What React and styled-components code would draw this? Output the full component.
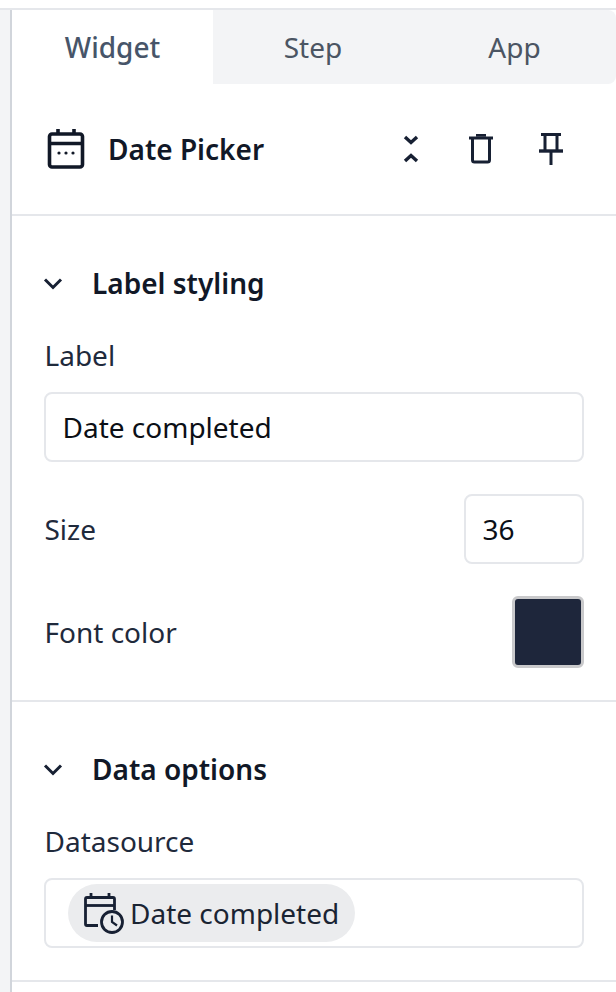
import React from "react";
import styled, { createGlobalStyle } from "styled-components";

const Global = createGlobalStyle`
  html, body { margin: 0; padding: 0; background: #fff; }
  body { font-family: "Noto Sans", "Open Sans", sans-serif; color: #111827; }
  * { box-sizing: border-box; }
`;

const Page = styled.div`
  width: 616px;
  height: 992px;
  overflow: hidden;
  padding-top: 8px;
  background: #fff;
`;
const Frame = styled.div`
  height: 984px;
  border-top: 2px solid #e5e7eb;
  display: flex;
`;
const Gutter = styled.div`
  width: 12px;
  background: #f3f4f6;
  border-right: 2px solid #d1d5db;
`;
const Panel = styled.div`
  flex: 1;
  display: flex;
  flex-direction: column;
`;
const Tabs = styled.div`
  height: 74px;
  display: grid;
  grid-template-columns: 201px 200px 1fr;
  background: #f3f4f6;
  border-radius: 0 8px 8px 0;
`;
const Tab = styled.div`
  display: flex;
  align-items: center;
  justify-content: center;
  font-size: 28px;
  color: #4b5563;
  font-weight: ${(p) => (p.$active ? 500 : 400)};
  background: ${(p) => (p.$active ? "#fff" : "transparent")};
  color: ${(p) => (p.$active ? "#475569" : "#4b5563")};
`;
const Header = styled.div`
  height: 132px;
  display: flex;
  align-items: center;
  padding: 0 45px 0 35px;
  border-bottom: 2px solid #e5e7eb;
`;
const Title = styled.div`
  flex: 1;
  margin-left: 23px;
  font-size: 28px;
  font-weight: 600;
  color: #111827;
`;
const Actions = styled.div`
  display: flex;
  gap: 30px;
  align-items: center;
`;
const IconSlot = styled.div`
  width: 40px;
  height: 40px;
  display: flex;
  align-items: center;
  justify-content: center;
`;
const Section = styled.section`
  padding: 0 32px;
  border-bottom: 2px solid #e5e7eb;
  height: ${(p) => p.$h}px;
`;
const SectionHead = styled.div`
  height: 38px;
  margin-top: 48px;
  display: flex;
  align-items: center;
  gap: 29px;
  font-size: 28px;
  font-weight: 600;
  color: #111827;
`;
const ChevronSvg = styled.svg`
  margin: 1px 0 0 -1px;
`;
const FieldLabel = styled.div`
  margin-top: 34px;
  padding-left: 0.5px;
  font-size: 28px;
  line-height: 38px;
  color: #1f2a3c;
`;
const Input = styled.div`
  margin-top: 18px;
  height: 70px;
  border: 2px solid #e5e7eb;
  border-radius: 8px;
  padding: 0 16.5px;
  display: flex;
  align-items: center;
  font-size: 28px;
  color: #0b0f16;
`;
const Row = styled.div`
  display: flex;
  align-items: center;
  justify-content: space-between;
  margin-top: ${(p) => p.$mt}px;
`;
const RowLabel = styled.div`
  padding-left: 0.5px;
  font-size: 28px;
  line-height: 38px;
  color: #1f2a3c;
`;
const SmallInput = styled(Input)`
  margin-top: 0;
  width: 120px;
`;
const Swatch = styled.div`
  width: 72px;
  height: 72px;
  border: 3px solid #c9c9cb;
  border-radius: 6px;
  background: #1e263b;
`;
const TokenBox = styled(Input)`
  padding: 0 22px;
`;
const Pill = styled.div`
  height: 58px;
  border-radius: 29px;
  background: #ebecee;
  padding: 0 16px;
  display: flex;
  align-items: center;
  gap: 6px;
  font-size: 28px;
  color: #1a2433;
`;

const CalendarIcon = () => (
  <svg width="38" height="40" viewBox="0 0 38 40" fill="none">
    <rect x="2.500" y="5" width="33" height="33" rx="2.500" stroke="#111827" strokeWidth="3.600" />
    <path d="M2 14.500h34" stroke="#111827" strokeWidth="3.600" />
    <path d="M11 0v6M27 0v6" stroke="#111827" strokeWidth="3.600" />
    <circle cx="12" cy="24" r="1.600" fill="#111827" />
    <circle cx="19" cy="24" r="1.600" fill="#111827" />
    <circle cx="26" cy="24" r="1.600" fill="#111827" />
  </svg>
);
const CollapseIcon = () => (
  <svg width="16" height="28" viewBox="0 0 16 28" fill="none" stroke="#172033" strokeWidth="3.400">
    <path d="M2 2l6 5.500L14 2M2 26l6-5.500L14 26" />
  </svg>
);
const TrashIcon = () => (
  <svg width="24" height="30" viewBox="0 0 24 30" fill="none" stroke="#172033" strokeWidth="3">
    <path d="M0 4h24" />
    <path d="M7 1.200h10" />
    <path d="M3.500 4v22a2 2 0 0 0 2 2h13a2 2 0 0 0 2-2V4" />
  </svg>
);
const PinIcon = () => (
  <svg width="24" height="32" viewBox="0 0 24 32" fill="none" stroke="#172033" strokeWidth="3">
    <path d="M2 1.500h20" />
    <path d="M6 1.500v16M18 1.500v16" />
    <path d="M0 18h24" strokeWidth="3.400" />
    <path d="M12 18v14" />
  </svg>
);
const Chevron = () => (
  <ChevronSvg width="20" height="12" viewBox="0 0 20 12" fill="none" stroke="#172033" strokeWidth="3">
    <path d="M2 1.500l8 8 8-8" />
  </ChevronSvg>
);
const CalendarClock = () => (
  <svg width="40" height="42" viewBox="0 0 40 42" fill="none" stroke="#172033" strokeWidth="2.800">
    <path d="M14 33.500H3a1.500 1.500 0 0 1-1.500-1.500V7a1.500 1.500 0 0 1 1.500-1.500h26a1.500 1.500 0 0 1 1.500 1.500v11" />
    <path d="M1.500 13.500h29" />
    <path d="M7 1v5M25 1v5" />
    <circle cx="28" cy="30" r="10.500" />
    <path d="M28 23.500V30l5 3.500" strokeWidth="2.200" />
  </svg>
);

export default function App() {
  return (
    <Page>
      <Global />
      <Frame>
        <Gutter />
        <Panel>
          <Tabs>
            <Tab $active>Widget</Tab>
            <Tab>Step</Tab>
            <Tab>App</Tab>
          </Tabs>
          <Header>
            <CalendarIcon />
            <Title>Date Picker</Title>
            <Actions>
              <IconSlot><CollapseIcon /></IconSlot>
              <IconSlot><TrashIcon /></IconSlot>
              <IconSlot><PinIcon /></IconSlot>
            </Actions>
          </Header>
          <Section $h={486}>
            <SectionHead>
              <Chevron />
              Label styling
            </SectionHead>
            <FieldLabel>Label</FieldLabel>
            <Input>Date completed</Input>
            <Row $mt={32}>
              <RowLabel>Size</RowLabel>
              <SmallInput>36</SmallInput>
            </Row>
            <Row $mt={32}>
              <RowLabel>Font color</RowLabel>
              <Swatch />
            </Row>
          </Section>
          <Section $h={280}>
            <SectionHead>
              <Chevron />
              Data options
            </SectionHead>
            <FieldLabel>Datasource</FieldLabel>
            <TokenBox>
              <Pill>
                <CalendarClock />
                Date completed
              </Pill>
            </TokenBox>
          </Section>
        </Panel>
      </Frame>
    </Page>
  );
}
